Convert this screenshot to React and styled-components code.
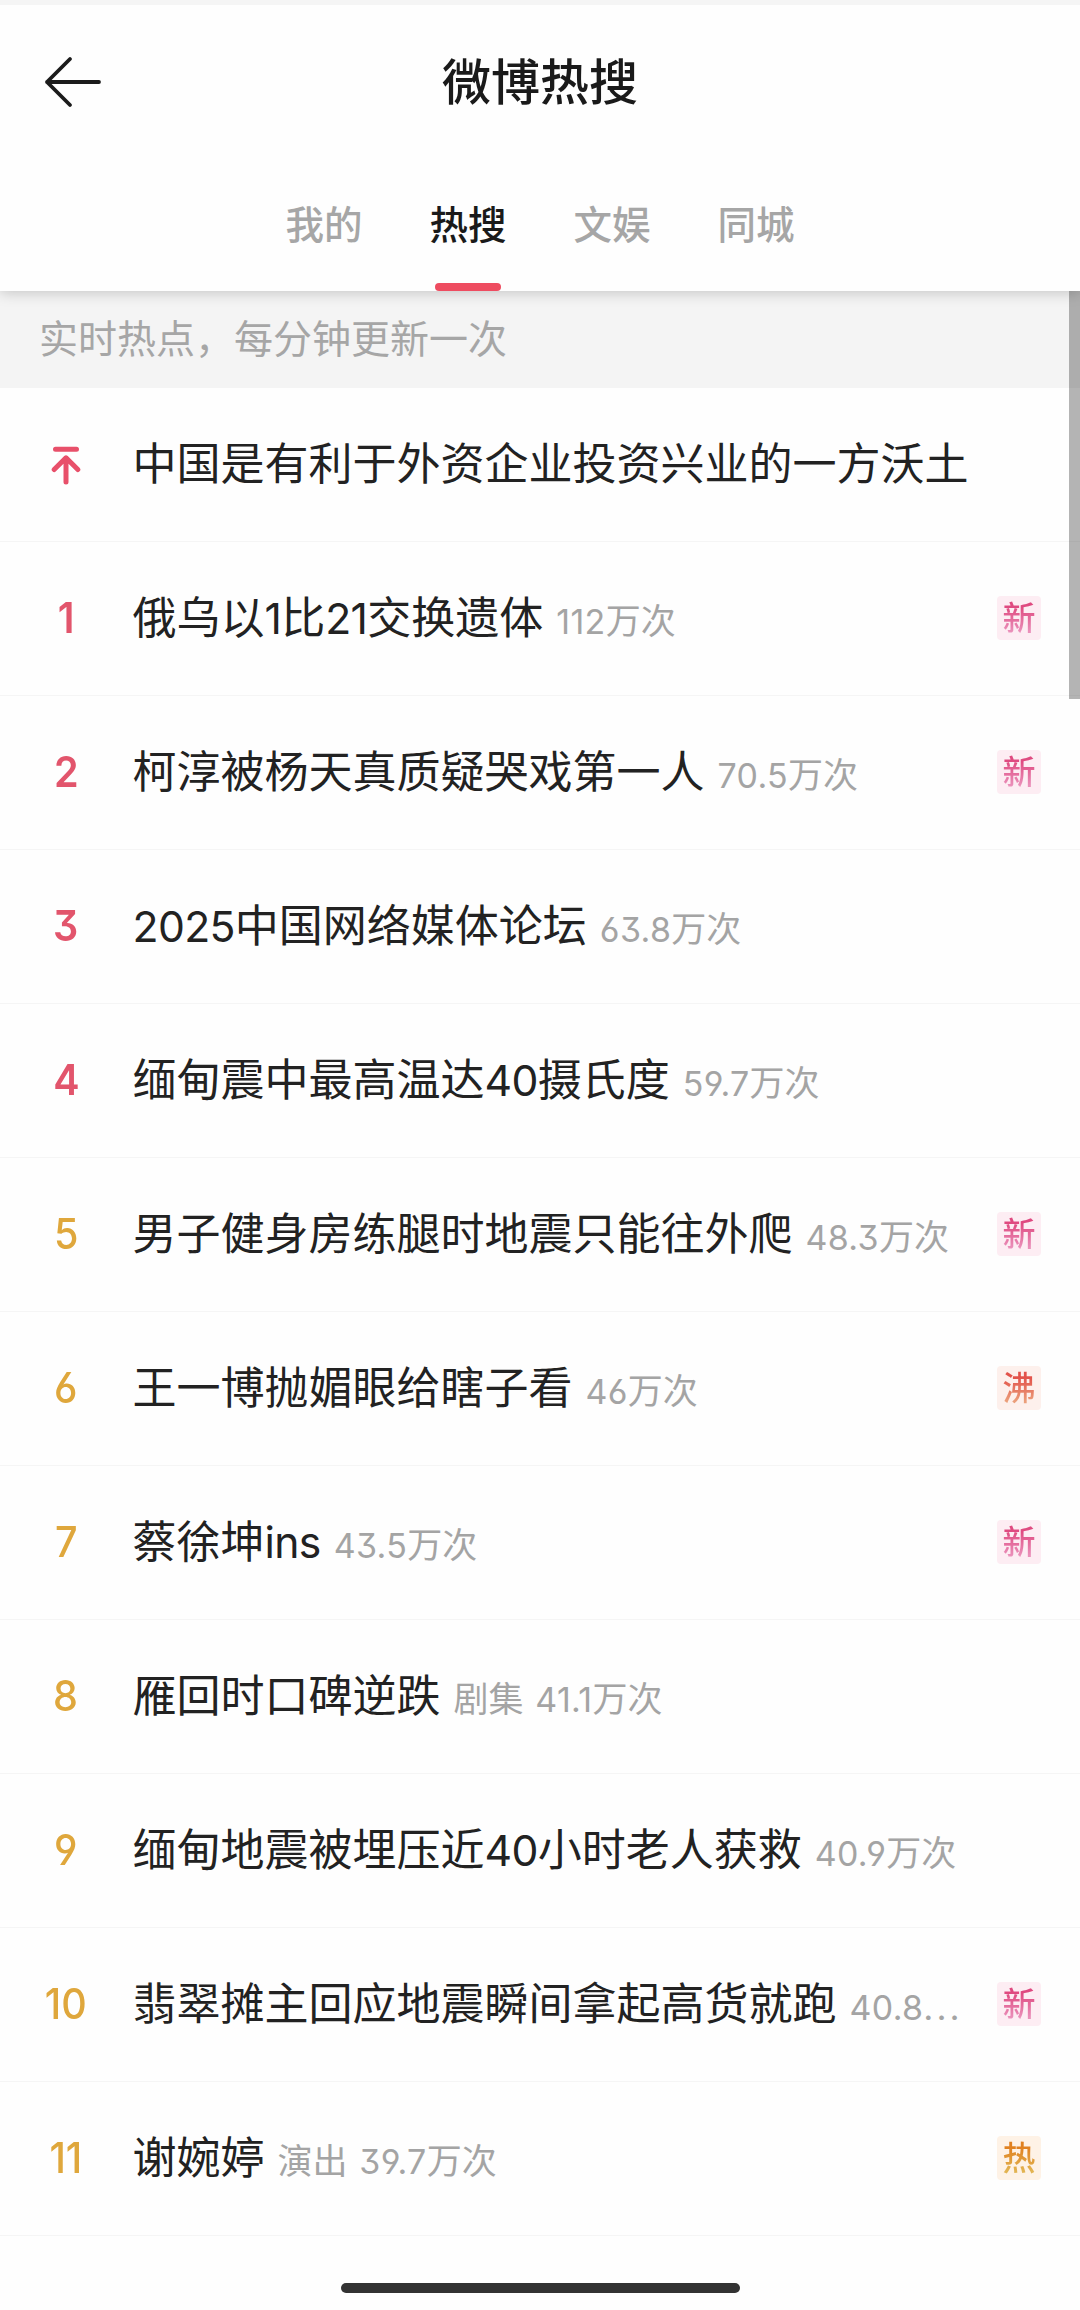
import React from "react";
import styled, { createGlobalStyle, css } from "styled-components";

const Global = createGlobalStyle`
  * { box-sizing: border-box; }
  body {
    margin: 0;
    background: #fefefe;
    font-family: "Noto Sans CJK SC", sans-serif;
    color: #222;
  }
`;

const Screen = styled.main`
  position: relative;
  display: flex;
  flex-direction: column;
  width: 1080px;
  height: 2310px;
  background: #fefefe;
  overflow: hidden;
`;

const StatusEdge = styled.div`
  position: relative;
  z-index: 2;
  height: 5px;
  background: #f5f5f5;
`;

const Header = styled.header`
  position: relative;
  z-index: 1;
  display: flex;
  flex-direction: column;
  height: 286px;
  background: #fefefe;
  box-shadow: 0 1px 14px rgba(0, 0, 0, 0.22);
`;

const TitleBar = styled.div`
  display: grid;
  grid-template-columns: 140px 1fr 140px;
  align-items: center;
  height: 154px;
`;

const BackButton = styled.button`
  display: flex;
  padding: 0 0 0 44px;
  border: 0;
  background: none;
  color: #1b1b1b;
`;

const Title = styled.h1`
  margin: 0;
  padding-bottom: 7px;
  text-align: center;
  font-size: 49px;
  line-height: 72px;
  font-weight: 500;
  color: #1a1a1a;
`;

const Tabs = styled.nav`
  display: flex;
  justify-content: center;
  gap: 67px;
  flex: 1;
`;

const Tab = styled.a`
  display: flex;
  flex-direction: column;
  align-items: center;
  justify-content: space-between;
  padding-top: 35px;
  font-size: 38.5px;
  line-height: 56px;
  font-weight: 500;
  color: ${(p) => (p.$active ? "#1a1a1a" : "#a6a6a6")};

  &::after {
    content: "";
    width: 66px;
    height: 8px;
    border-radius: 4px;
    background: ${(p) => (p.$active ? "#ee4c60" : "transparent")};
  }
`;

const Notice = styled.p`
  display: flex;
  align-items: center;
  height: 97px;
  margin: 0;
  padding: 0 0 7px 39px;
  background: #f4f4f4;
  font-size: 39px;
  color: #a6a6a6;
`;

const List = styled.ol`
  margin: 0;
  padding: 0;
  list-style: none;
`;

const Row = styled.li`
  display: flex;
  align-items: center;
  height: 154px;
  padding-right: 39px;
  border-bottom: 1px solid #f5f5f5;
`;

const Rank = styled.span`
  display: flex;
  justify-content: center;
  flex: none;
  width: 132px;
  font-family: Inter, sans-serif;
  font-size: 43px;
  font-feature-settings: "cv03", "cv04", "cv09";
  font-weight: ${(p) => (p.$top ? 600 : 500)};
  color: ${(p) => (p.$top ? "#e2556c" : "#dfa73c")};
`;

const RankNumber = styled.span`
  padding-bottom: 3px;
  transform: scaleX(0.92);
`;

const Topic = styled.div`
  flex: 1;
  min-width: 0;
  padding: 0 0 ${(p) => (p.$pinned ? 8 : 0)}px 0.5px;
  white-space: nowrap;
  font-size: 44px;
  line-height: 64px;
`;

const Latin = styled.span`
  font-family: Inter, sans-serif;
  font-size: 0.97em;
  font-feature-settings: "cv03", "cv04", "cv09";
  letter-spacing: -0.015em;
`;

const Count = styled.span`
  margin-left: 13px;
  font-size: 35px;
  word-spacing: 4px;
  color: #a4a4a4;

  ${Latin} {
    letter-spacing: 0.01em;
  }
`;

const Dots = styled.span`
  font-family: Inter, sans-serif;
  letter-spacing: 3px;
`;

const badgeTones = {
  新: css`
    --from: #df4a80;
    --to: #ea90ba;
    background: #fdedf3;
  `,
  沸: css`
    --from: #e2524a;
    --to: #eb9f7a;
    background: #fdf0ec;
  `,
  热: css`
    --from: #e0801f;
    --to: #e2b452;
    background: #fef2e6;
  `,
};

const Badge = styled.span`
  display: flex;
  align-items: center;
  justify-content: center;
  flex: none;
  width: 44px;
  height: 44px;
  margin-bottom: 2px;
  padding-bottom: 4px;
  border-radius: 4px;
  font-size: 33px;
  line-height: 44px;
  font-weight: 500;
  ${(p) => badgeTones[p.$kind]}
`;

const BadgeText = styled.span`
  background: linear-gradient(to bottom, var(--from) 30%, var(--to) 85%);
  background-clip: text;
  -webkit-background-clip: text;
  color: transparent;
`;

const ScrollThumb = styled.div`
  position: absolute;
  z-index: 2;
  top: 291px;
  right: 0;
  width: 11px;
  height: 408px;
  background: rgba(0, 0, 0, 0.29);
`;

const HomeIndicator = styled.div`
  align-self: center;
  width: 399px;
  height: 10px;
  margin-top: 47px;
  border-radius: 5px;
  background: #333;
`;

const BackIcon = () => (
  <svg width="58" height="52" viewBox="0 0 58 52" fill="none" stroke="currentColor" strokeWidth="3.8" strokeLinecap="round" strokeLinejoin="round">
    <path d="M26 3 3 26l23 23M3 26h52" />
  </svg>
);

const PinIcon = () => (
  <svg width="30" height="40" viewBox="0 0 30 40" fill="none" stroke="#e8506a" strokeWidth="5" strokeLinecap="round" strokeLinejoin="round">
    <path d="M4.5 4.3h21M15 37V13M3.2 24.5 15 12.8l11.8 11.7" />
  </svg>
);

const topics = [
  { title: "中国是有利于外资企业投资兴业的一方沃土" },
  { title: "俄乌以1比21交换遗体", count: "112万次", badge: "新" },
  { title: "柯淳被杨天真质疑哭戏第一人", count: "70.5万次", badge: "新" },
  { title: "2025中国网络媒体论坛", count: "63.8万次" },
  { title: "缅甸震中最高温达40摄氏度", count: "59.7万次" },
  { title: "男子健身房练腿时地震只能往外爬", count: "48.3万次", badge: "新" },
  { title: "王一博抛媚眼给瞎子看", count: "46万次", badge: "沸" },
  { title: "蔡徐坤ins", count: "43.5万次", badge: "新" },
  { title: "雁回时口碑逆跌", count: "剧集 41.1万次" },
  { title: "缅甸地震被埋压近40小时老人获救", count: "40.9万次" },
  { title: "翡翠摊主回应地震瞬间拿起高货就跑", count: "40.8", cut: true, badge: "新" },
  { title: "谢婉婷", count: "演出 39.7万次", badge: "热" },
];

const mixed = (text) =>
  text.split(/([\w.]+)/).map((part, i) => (i % 2 ? <Latin key={i}>{part}</Latin> : part));

export default function App() {
  return (
    <Screen>
      <Global />
      <StatusEdge />
      <Header>
        <TitleBar>
          <BackButton aria-label="返回">
            <BackIcon />
          </BackButton>
          <Title>微博热搜</Title>
        </TitleBar>
        <Tabs>
          <Tab>我的</Tab>
          <Tab $active>热搜</Tab>
          <Tab>文娱</Tab>
          <Tab>同城</Tab>
        </Tabs>
      </Header>
      <Notice>实时热点，每分钟更新一次</Notice>
      <List>
        {topics.map((t, i) => (
          <Row key={t.title}>
            <Rank $top={i < 5}>{i === 0 ? <PinIcon /> : <RankNumber>{i}</RankNumber>}</Rank>
            <Topic $pinned={i === 0}>
              {mixed(t.title)}
              {t.count && (
                <Count>
                  {mixed(t.count)}
                  {t.cut && <Dots>...</Dots>}
                </Count>
              )}
            </Topic>
            {t.badge && (
              <Badge $kind={t.badge}>
                <BadgeText>{t.badge}</BadgeText>
              </Badge>
            )}
          </Row>
        ))}
      </List>
      <HomeIndicator />
      <ScrollThumb />
    </Screen>
  );
}
